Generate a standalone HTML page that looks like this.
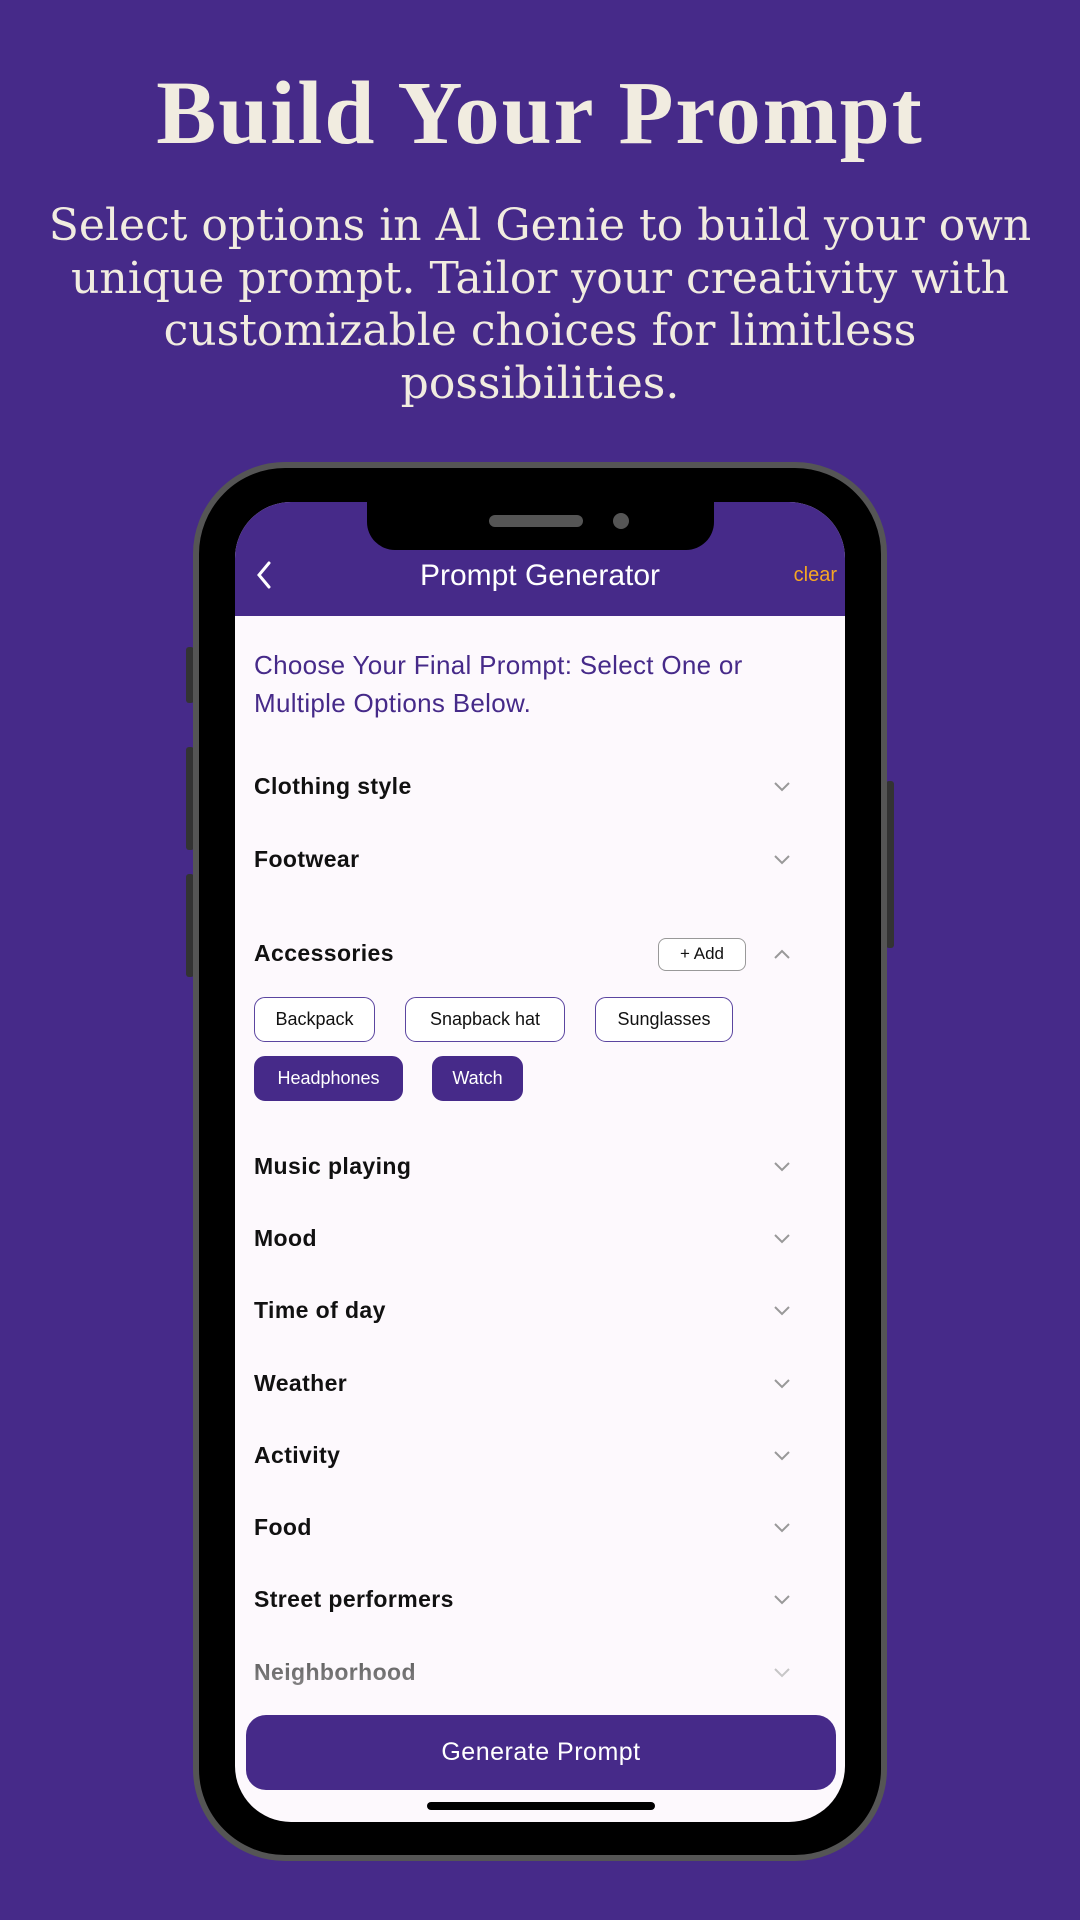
<!DOCTYPE html>
<html><head><meta charset="utf-8"><style>
*{margin:0;padding:0;box-sizing:border-box}
body{width:1080px;height:1920px;background:#462a89;position:relative;overflow:hidden;font-family:"Liberation Sans",sans-serif}
.t{position:absolute;left:0;width:1080px;text-align:center;color:#f1ece0}
h1.t{top:62px;font-size:90px;font-weight:bold;letter-spacing:2px;font-family:"Liberation Serif",serif}
p.t{top:200px;font-size:44px;line-height:52.5px;font-family:"DejaVu Serif",serif;white-space:nowrap}
.phone{position:absolute;left:193px;top:462px;width:694px;height:1399px;border:6px solid #555;border-radius:92px;background:#000}
.btn{position:absolute;background:#333;border-radius:3px}
.screen{position:absolute;left:235px;top:502px;width:610px;height:1320px;border-radius:56px;background:#fdf9fd;overflow:hidden}
.hdr{position:absolute;left:0;top:0;width:610px;height:114px;background:#462a89}
.notch{position:absolute;left:132px;top:0;width:347px;height:48px;background:#000;border-radius:0 0 28px 28px}
.spk{position:absolute;left:122px;top:13px;width:94px;height:12px;border-radius:6px;background:#555}
.cam{position:absolute;left:246px;top:11px;width:16px;height:16px;border-radius:50%;background:#555}
.title{position:absolute;left:0;width:610px;top:57px;text-align:center;color:#fff;font-size:30px}
.clear{position:absolute;right:8px;top:62px;color:#f5a623;font-size:20px}
.intro{position:absolute;left:19px;top:144px;color:#462a89;font-size:26px;line-height:38px;letter-spacing:0.3px}
.row{position:absolute;left:19px;font-size:23px;font-weight:bold;color:#111;letter-spacing:0.4px}
.chev{position:absolute;left:537px;width:20px;height:12px}
.chip{position:absolute;height:45px;border:1.5px solid #5b45a0;border-radius:11px;font-size:18px;color:#111;text-align:center;line-height:42px;background:#fff}
.chip.on{background:#462a89;color:#fff;border-color:#462a89}
.add{position:absolute;left:423px;top:436px;width:88px;height:33px;border:1.5px solid #999;border-radius:8px;font-size:17px;text-align:center;line-height:30px;color:#111;background:#fff}
.gen{position:absolute;left:11px;top:1213px;width:590px;height:75px;border-radius:20px;background:#462a89;color:#fff;font-size:25px;text-align:center;line-height:75px;letter-spacing:0.5px}
.home{position:absolute;left:192px;top:1300px;width:228px;height:8px;border-radius:4px;background:#000}
.fade{position:absolute;left:0;top:1150px;width:610px;height:60px;background:linear-gradient(rgba(253,249,253,0),rgba(253,249,253,0.5))}
</style></head><body>
<h1 class="t">Build Your Prompt</h1>
<p class="t">Select options in Al Genie to build your own<br>unique prompt. Tailor your creativity with<br>customizable choices for limitless<br>possibilities.</p>
<div class="btn" style="left:186px;top:647px;width:8px;height:56px"></div>
<div class="btn" style="left:186px;top:747px;width:8px;height:103px"></div>
<div class="btn" style="left:186px;top:874px;width:8px;height:103px"></div>
<div class="btn" style="left:886px;top:781px;width:8px;height:167px"></div>
<div class="phone"></div>
<div class="screen">
<div class="hdr">
<svg style="position:absolute;left:20px;top:59px" width="18" height="28" viewBox="0 0 18 28"><path d="M14 2 L4 14 L14 26" stroke="#fff" stroke-width="3" fill="none" stroke-linecap="round"/></svg>
<div class="title">Prompt Generator</div>
<div class="clear">clear</div>
</div>
<div class="notch"><div class="spk"></div><div class="cam"></div></div>
<div class="intro">Choose Your Final Prompt: Select One or<br>Multiple Options Below.</div>
<div class="row" style="top:271px">Clothing style</div>
<div class="row" style="top:344px">Footwear</div>
<div class="row" style="top:438px">Accessories</div>
<div class="add">+ Add</div>
<div class="chip" style="left:19px;top:495px;width:121px">Backpack</div>
<div class="chip" style="left:170px;top:495px;width:160px">Snapback hat</div>
<div class="chip" style="left:360px;top:495px;width:138px">Sunglasses</div>
<div class="chip on" style="left:19px;top:554px;width:149px">Headphones</div>
<div class="chip on" style="left:197px;top:554px;width:91px">Watch</div>
<div class="row" style="top:651px">Music playing</div>
<div class="row" style="top:723px">Mood</div>
<div class="row" style="top:795px">Time of day</div>
<div class="row" style="top:868px">Weather</div>
<div class="row" style="top:940px">Activity</div>
<div class="row" style="top:1012px">Food</div>
<div class="row" style="top:1084px">Street performers</div>
<div class="row" style="top:1157px;color:#555">Neighborhood</div>
<svg class="chev" style="top:279px" viewBox="0 0 20 12"><path d="M3 2 L10 9 L17 2" stroke="#999" stroke-width="2" fill="none"/></svg>
<svg class="chev" style="top:352px" viewBox="0 0 20 12"><path d="M3 2 L10 9 L17 2" stroke="#999" stroke-width="2" fill="none"/></svg>
<svg class="chev" style="top:446px" viewBox="0 0 20 12"><path d="M3 10 L10 3 L17 10" stroke="#999" stroke-width="2" fill="none"/></svg>
<svg class="chev" style="top:659px" viewBox="0 0 20 12"><path d="M3 2 L10 9 L17 2" stroke="#999" stroke-width="2" fill="none"/></svg>
<svg class="chev" style="top:731px" viewBox="0 0 20 12"><path d="M3 2 L10 9 L17 2" stroke="#999" stroke-width="2" fill="none"/></svg>
<svg class="chev" style="top:803px" viewBox="0 0 20 12"><path d="M3 2 L10 9 L17 2" stroke="#999" stroke-width="2" fill="none"/></svg>
<svg class="chev" style="top:876px" viewBox="0 0 20 12"><path d="M3 2 L10 9 L17 2" stroke="#999" stroke-width="2" fill="none"/></svg>
<svg class="chev" style="top:948px" viewBox="0 0 20 12"><path d="M3 2 L10 9 L17 2" stroke="#999" stroke-width="2" fill="none"/></svg>
<svg class="chev" style="top:1020px" viewBox="0 0 20 12"><path d="M3 2 L10 9 L17 2" stroke="#999" stroke-width="2" fill="none"/></svg>
<svg class="chev" style="top:1092px" viewBox="0 0 20 12"><path d="M3 2 L10 9 L17 2" stroke="#999" stroke-width="2" fill="none"/></svg>
<svg class="chev" style="top:1165px" viewBox="0 0 20 12"><path d="M3 2 L10 9 L17 2" stroke="#bbb" stroke-width="2" fill="none"/></svg>
<div class="fade"></div>
<div class="gen">Generate Prompt</div>
<div class="home"></div>
</div>
</body></html>
